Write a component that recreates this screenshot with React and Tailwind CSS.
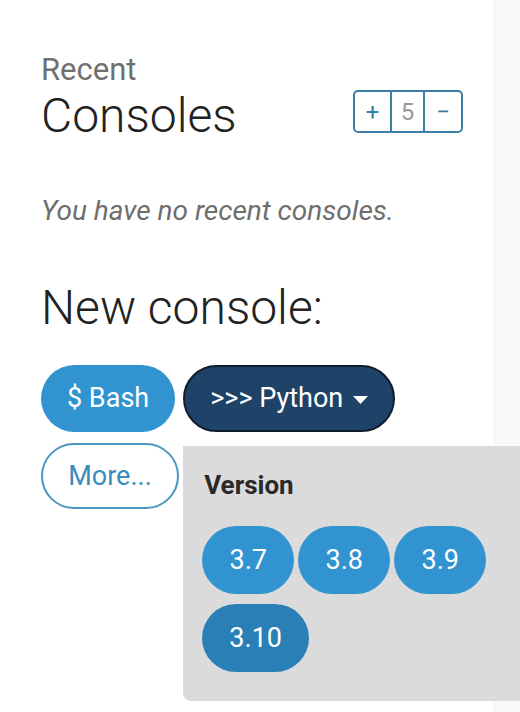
import React from "react";

const versions = ["3.7", "3.8", "3.9"];

export default function App() {
  return (
    <div className="flex min-h-[712px] w-[520px] overflow-hidden bg-white font-['Roboto',sans-serif]">
      {/* Main column */}
      <div className="w-[495px] shrink-0 border-r border-[#efefef] pl-[41px] pr-[31px] pt-[54px]">
        {/* Heading */}
        <div className="text-[31px] leading-[32px] text-[#707070]">Recent</div>
        <div className="mt-[3px] flex items-start justify-between">
          <h1 className="text-[48px] font-light leading-[54px] text-[#222]">Consoles</h1>
          <div className="mt-[1px] flex h-[43px] items-stretch rounded-[5px] border-2 border-[#3b7fa6] text-[24px]">
            <button className="w-[35px] text-[#3b7fa6]">+</button>
            <span className="flex w-[35px] items-center justify-center border-x-2 border-[#3b7fa6] text-[#999]">5</span>
            <button className="w-[36px] text-[#3b7fa6]">−</button>
          </div>
        </div>

        <p className="mt-[52px] text-[28px] italic leading-[32px] text-[#6e6e6e]">
          You have no recent consoles.
        </p>

        <h2 className="mt-[54px] text-[48px] font-light leading-[54px] text-[#222]">New console:</h2>

        {/* Console buttons */}
        <div className="mt-[30px] flex w-[360px] flex-wrap gap-x-[8px] gap-y-[11px]">
          <button className="h-[67px] rounded-full bg-[#3194d0] px-[26px] text-[27px] text-white">$ Bash</button>
          <div className="relative">
            <button className="flex h-[67px] items-center gap-[10px] rounded-full border-2 border-[#0f1e2e] bg-[#1f4268] px-[25px] text-[27px] text-white">
              <span>&gt;&gt;&gt; Python</span>
              <svg width="15" height="8" viewBox="0 0 15 8" className="mt-[2px]">
                <path d="M0 0h15L7.5 8z" fill="white" />
              </svg>
            </button>
            {/* Dropdown menu */}
            <div className="absolute left-0 top-[81px] z-10 w-[340px] rounded-bl-[8px] bg-[#dbdbdb] pb-[29px] pl-[19px] pr-[30px] pt-[24px]">
              <div className="pl-[2px] text-[26px] font-bold leading-[30px] text-[#2a2a2a]">Version</div>
              <div className="mt-[26px] flex flex-wrap gap-x-[4px] gap-y-[10px]">
                {versions.map((v) => (
                  <button key={v} className="h-[68px] w-[92px] rounded-full bg-[#3194d0] text-[27px] text-white">
                    {v}
                  </button>
                ))}
                <button className="h-[68px] w-[107px] rounded-full bg-[#2a80b6] text-[27px] text-white">3.10</button>
              </div>
            </div>
          </div>
          <button className="h-[66px] w-[138px] rounded-full border-2 border-[#4a97c4] bg-white text-[27px] text-[#3a8cc0]">
            More...
          </button>
        </div>
      </div>
      {/* Side strip */}
      <div className="flex-1 bg-[#fafafa]" />
    </div>
  );
}
